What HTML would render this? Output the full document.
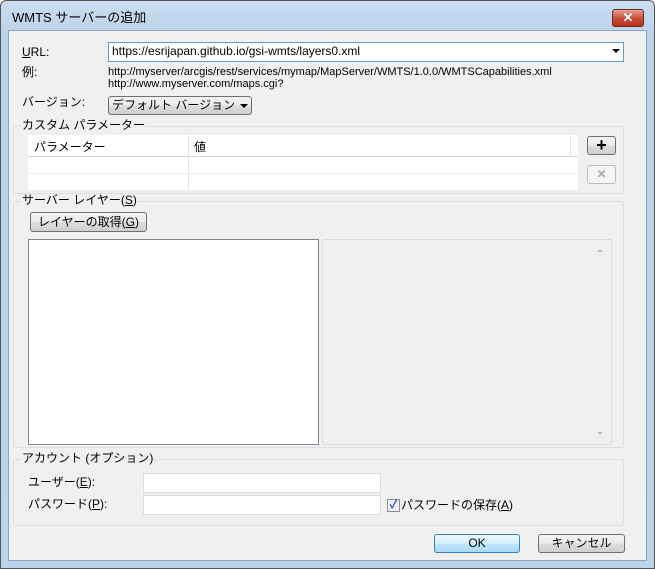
<!DOCTYPE html><html><head><meta charset="utf-8"><style>
*{box-sizing:border-box}body{margin:0;width:655px;height:569px;overflow:hidden;font-family:"Liberation Sans","Noto Sans CJK JP",sans-serif;font-size:12px;color:#000}
.a{position:absolute}
#frame{left:0;top:0;width:655px;height:569px;background:linear-gradient(#c9dcf1,#b9d1ea 40px,#bcd3ec);border:1px solid #555;border-radius:6px 6px 0 0}
#client{left:8px;top:30px;width:639px;height:531px;background:#f0f0f0;border:1px solid #8ea6c4}
.t{white-space:nowrap;line-height:13px}
.inp{background:#fff;border:1px solid #abadb3}
.grp{border:1px solid #d5dfe5;border-radius:3px}
.gl{background:#f0f0f0;padding:0 1px}
.btn{border:1px solid #707070;border-radius:3px;background:linear-gradient(#f2f2f2,#ebebeb 50%,#dddddd 51%,#cfcfcf);text-align:center}
</style></head><body>
<div id="frame" class="a"></div>
<div class="a t" style="left:12px;top:11px;font-size:13px">WMTS サーバーの追加</div>
<div class="a" style="left:612px;top:9px;width:32px;height:18px;border:1px solid #6d2a24;border-radius:3px;background:linear-gradient(#e8a090,#c7503c 50%,#b8301c);color:#fff;font-weight:bold;text-align:center;line-height:16px;font-size:13px">✕</div>
<div id="client" class="a"></div>
<div class="a t" style="left:22px;top:46px"><u>U</u>RL:</div>
<div class="a inp" style="left:108px;top:42px;width:516px;height:20px;border-color:#5e9ccf"></div>
<div class="a t" style="left:112px;top:45px">https://esrijapan.github.io/gsi-wmts/layers0.xml</div>
<div class="a" style="left:488px;top:49px;left:612px;width:0;height:0;border:4px solid transparent;border-top:4px solid #000;border-bottom:0"></div>
<div class="a t" style="left:22px;top:66px">例:</div>
<div class="a t" style="left:108px;top:66px;font-size:11px">http://myserver/arcgis/rest/services/mymap/MapServer/WMTS/1.0.0/WMTSCapabilities.xml</div>
<div class="a t" style="left:108px;top:78px;font-size:11px">http://www.myserver.com/maps.cgi?</div>
<div class="a t" style="left:22px;top:96px">バージョン:</div>
<div class="a btn" style="left:108px;top:96px;width:144px;height:19px"></div>
<div class="a t" style="left:112px;top:99px">デフォルト バージョン</div>
<div class="a" style="left:240px;top:104px;border:4px solid transparent;border-top:4px solid #000;border-bottom:0"></div>
<div class="a grp" style="left:13px;top:126px;width:611px;height:68px"></div>
<div class="a t gl" style="left:21px;top:119px">カスタム パラメーター</div>
<div class="a" style="left:28px;top:135px;width:550px;height:55px;background:#fff"></div>
<div class="a" style="left:28px;top:156px;width:550px;height:1px;background:#d5d5d5"></div>
<div class="a" style="left:28px;top:173px;width:550px;height:1px;background:#eee"></div>
<div class="a" style="left:188px;top:135px;width:1px;height:55px;background:#e5e5e5"></div>
<div class="a" style="left:570px;top:135px;width:1px;height:22px;background:#e5e5e5"></div>
<div class="a t" style="left:34px;top:141px">パラメーター</div>
<div class="a t" style="left:194px;top:141px">値</div>
<div class="a btn" style="left:587px;top:136px;width:29px;height:19px;font-weight:bold;font-size:18px;line-height:16px">+</div>
<div class="a" style="left:587px;top:165px;width:29px;height:19px;border:1px solid #bbb;border-radius:3px;background:#f4f4f4;color:#aaa;text-align:center;line-height:17px;font-weight:bold">✕</div>
<div class="a grp" style="left:13px;top:201px;width:611px;height:247px"></div>
<div class="a t gl" style="left:21px;top:194px">サーバー レイヤー(<u>S</u>)</div>
<div class="a btn" style="left:30px;top:212px;width:117px;height:20px;line-height:18px">レイヤーの取得(<u>G</u>)</div>
<div class="a" style="left:28px;top:239px;width:291px;height:206px;background:#fff;border:1px solid #828790"></div>
<div class="a" style="left:322px;top:239px;width:290px;height:206px;border:1px solid #dcdcdc;background:#f0f0f0"></div>
<div class="a" style="left:597px;top:249px;border:3px solid transparent;border-bottom:3px solid #bbb;border-top:0"></div>
<div class="a" style="left:597px;top:432px;border:3px solid transparent;border-top:3px solid #bbb;border-bottom:0"></div>
<div class="a grp" style="left:13px;top:459px;width:611px;height:67px"></div>
<div class="a t gl" style="left:21px;top:452px">アカウント (オプション)</div>
<div class="a t" style="left:28px;top:476px">ユーザー(<u>E</u>):</div>
<div class="a inp" style="left:143px;top:473px;width:238px;height:20px;border-color:#dcdcdc"></div>
<div class="a t" style="left:28px;top:498px">パスワード(<u>P</u>):</div>
<div class="a inp" style="left:143px;top:495px;width:238px;height:20px;border-color:#dcdcdc"></div>
<div class="a" style="left:387px;top:499px;width:13px;height:13px;border:1px solid #8f8f8f;background:#eef;color:#2a4d9c;font-size:11px;line-height:11px;text-align:center;font-weight:bold">✓</div>
<div class="a t" style="left:401px;top:499px">パスワードの保存(<u>A</u>)</div>
<div class="a btn" style="left:434px;top:534px;width:86px;height:19px;border-color:#3c7fb1;background:linear-gradient(#eaf6fd,#d9f0fc 50%,#bee6fd 51%,#a7d9f5);line-height:17px">OK</div>
<div class="a btn" style="left:538px;top:534px;width:87px;height:19px;line-height:17px">キャンセル</div>
</body></html>
